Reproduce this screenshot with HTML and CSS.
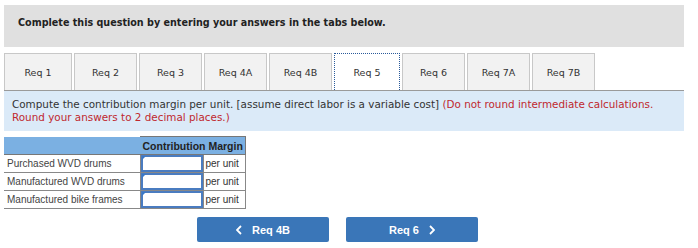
FILE: index.html
```html
<!DOCTYPE html>
<html lang="en">
  <head>
    <meta charset="UTF-8" />
    <title>Req 5</title>
    <link rel="stylesheet" href="styles.css">
  </head>
  <body>
    <div class="container">
      <div class="instructions">
        <strong>Complete this question by entering your answers in the tabs below.</strong>
      </div>

      <div class="tabs">
        <div class="tab first">Req 1</div>
        <div class="tab">Req 2</div>
        <div class="tab">Req 3</div>
        <div class="tab">Req 4A</div>
        <div class="tab">Req 4B</div>
        <div class="tab active">Req 5</div>
        <div class="tab">Req 6</div>
        <div class="tab">Req 7A</div>
        <div class="tab">Req 7B</div>
      </div>

      <div class="question">
        <p>
          Compute the contribution margin per unit. [assume direct labor is a variable cost]
          <span class="note">(Do not round intermediate calculations. Round your answers to 2 decimal places.)</span>
        </p>
      </div>

      <table class="answers">
        <tr>
          <th class="blank"></th>
          <th colspan="2">Contribution Margin</th>
        </tr>
        <tr>
          <td class="label">Purchased WVD drums</td>
          <td class="entry"><span class="marker"></span><input type="text" /></td>
          <td class="unit">per unit</td>
        </tr>
        <tr>
          <td class="label">Manufactured WVD drums</td>
          <td class="entry"><span class="marker"></span><input type="text" /></td>
          <td class="unit">per unit</td>
        </tr>
        <tr>
          <td class="label">Manufactured bike frames</td>
          <td class="entry"><span class="marker"></span><input type="text" /></td>
          <td class="unit">per unit</td>
        </tr>
      </table>

      <div class="nav">
        <button class="navBtn">
          <svg class="chev" width="6" height="10" viewBox="0 0 6 10"><polyline points="5,1 1,5 5,9" /></svg>
          Req 4B
        </button>
        <button class="navBtn">
          Req 6
          <svg class="chev" width="6" height="10" viewBox="0 0 6 10"><polyline points="1,1 5,5 1,9" /></svg>
        </button>
      </div>
    </div>
  </body>
</html>
```

FILE: styles.css
```css
* {
  margin: 0;
  box-sizing: border-box;
}

body {
  padding: 5px 14px 0 4px;
  font-family: "DejaVu Sans", Verdana, sans-serif;
  color: #333;
  background: #fff;
}

.instructions {
  background-color: #e0e0e0;
  height: 42px;
  padding: 12px 14px 0;
  font-size: 9.6px;
  color: #222;
}

.tabs {
  display: flex;
  gap: 2px;
  margin-top: 6px;
  height: 37px;
}

.tab {
  width: 63px;
  display: flex;
  align-items: center;
  justify-content: center;
  background-color: #f2f2f2;
  border: 1px solid #c8c8c8;
  border-bottom: none;
  font-size: 9.5px;
  color: #333;
}

.tab.first {
  width: 68px;
}

.tab.active {
  background-color: #fff;
  border: 1px dotted #2a5a9a;
  border-bottom: none;
  width: 66px;
}

.question {
  background-color: #dbeaf8;
  border-top: 1px solid #9a9a9a;
  height: 41px;
  padding: 7px 20px 0 8px;
  font-size: 10.4px;
  line-height: 12.5px;
  color: #333;
}

.question .note {
  color: #c0282e;
}

.answers {
  margin-top: 5px;
  border-collapse: collapse;
  font-family: "Liberation Sans", Arial, sans-serif;
  font-size: 10px;
}

.answers th {
  background-color: #7bb0e2;
  border: 1px solid #777;
  border-left-color: #7bb0e2;
  height: 18px;
  font-weight: bold;
  font-size: 10.5px;
  color: #222;
  padding: 0 2px;
}

.answers th.blank {
  width: 136px;
  border: none;
  border-bottom: 1px solid #777;
}

.answers td {
  border: 1px solid #888;
  height: 18px;
}

.answers td.label {
  border-left: none;
  padding: 0 3px;
  color: #444;
}

.answers td.entry {
  position: relative;
  width: 63px;
  padding: 0;
}

.entry input {
  display: block;
  width: 100%;
  height: 17px;
  border: 2px solid #4a7cc0;
  outline: none;
}

.entry .marker {
  position: absolute;
  left: 1px;
  top: 1px;
  width: 0;
  height: 0;
  border-top: 4px solid #3a78c6;
  border-right: 4px solid transparent;
}

.answers td.unit {
  padding: 0 2px;
  color: #333;
}

.nav {
  display: flex;
  gap: 17px;
  padding-left: 193px;
  margin-top: 8px;
}

.navBtn {
  width: 132px;
  height: 25px;
  display: flex;
  align-items: center;
  justify-content: center;
  gap: 10px;
  background-color: #3a76b8;
  border: none;
  border-radius: 2px;
  color: #fff;
  font-family: "Liberation Sans", Arial, sans-serif;
  font-weight: bold;
  font-size: 11px;
}

.navBtn .chev {
  fill: none;
  stroke: #fff;
  stroke-width: 1.8;
}
```
